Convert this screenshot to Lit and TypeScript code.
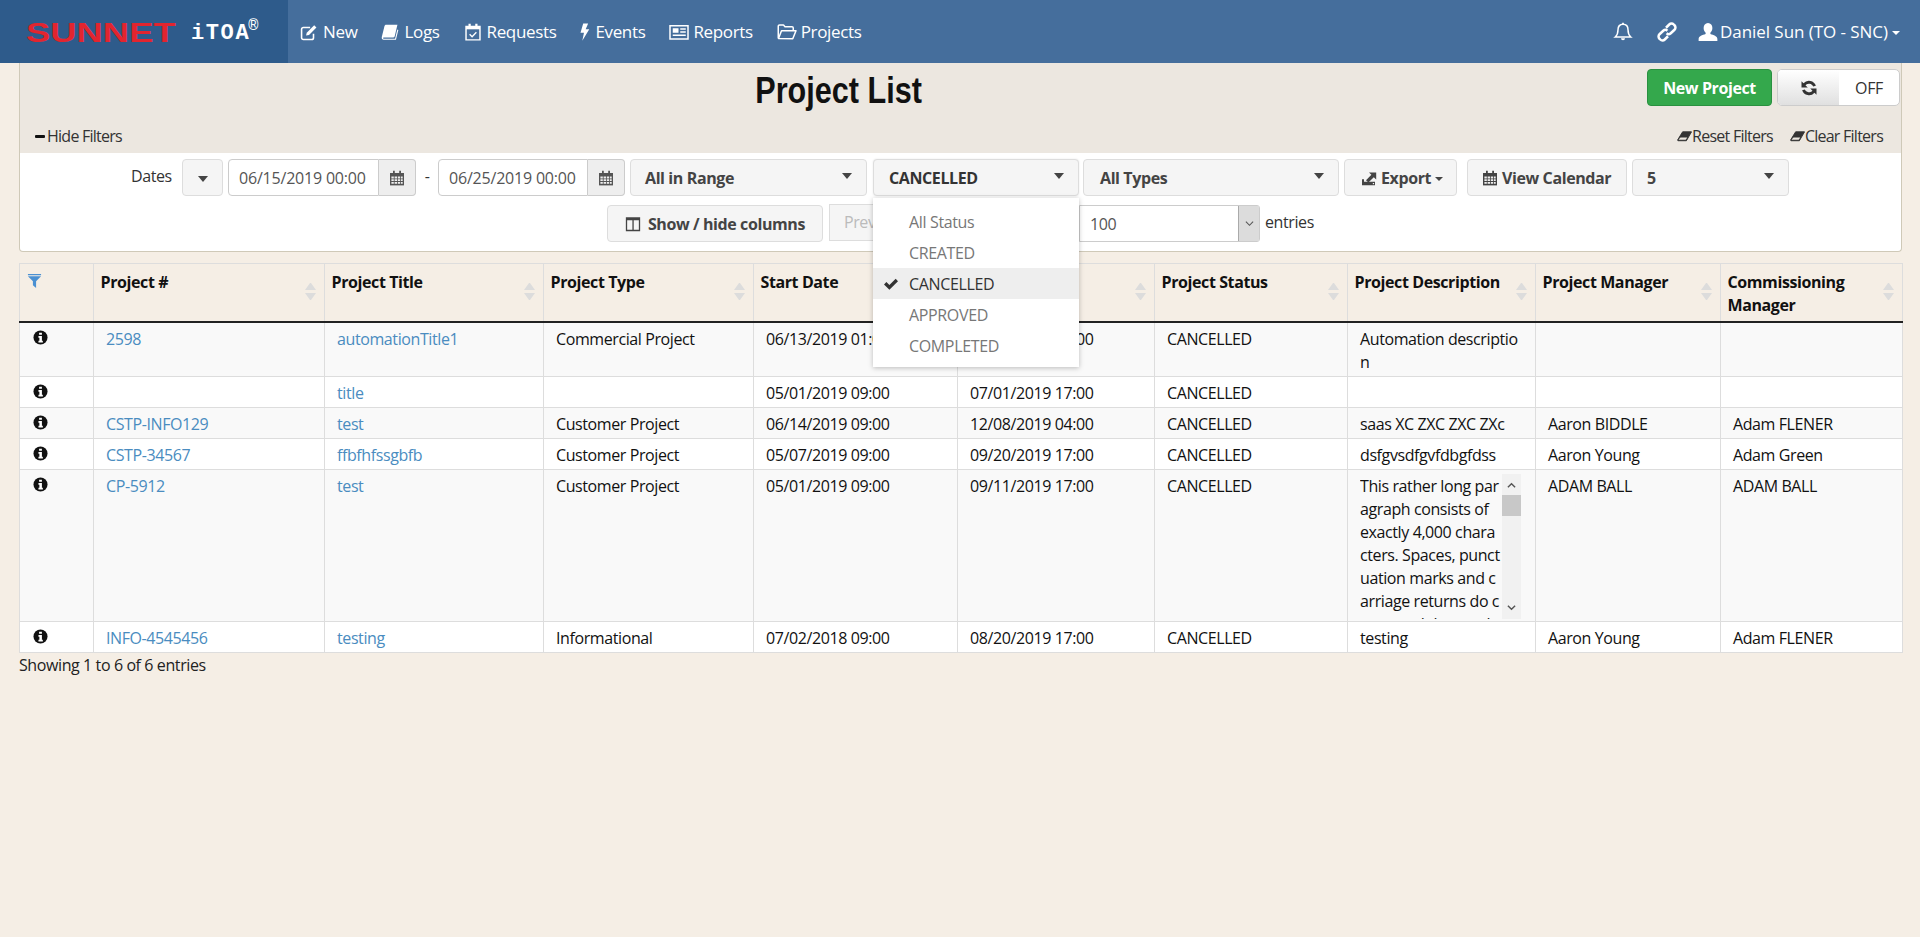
import { LitElement, html, css, svg } from 'lit';
import { customElement } from 'lit/decorators.js';

const icon = (body: unknown, cls = '') =>
  html`<svg class="ico ${cls}" viewBox="0 0 16 16" aria-hidden="true">${body}</svg>`;

const icons = {
  edit: svg`<path d="M12 9.500V13a1.600 1.600 0 0 1-1.600 1.600H3A1.600 1.600 0 0 1 1.400 13V5.600A1.600 1.600 0 0 1 3 4h6" fill="none" stroke="currentColor" stroke-width="1.400"/><path d="M6 8.600 12.600 2l2 2L8 10.600l-2.600.6z" fill="currentColor"/>`,
  book: svg`<path d="M4.600 1.500h10l-2.400 10.200a1.600 1.600 0 0 1-1.500 1.200H2.600c-.5 0-.8.3-.7.6.1.3.4.5.8.5h9.800l2-8.200.9.5-2.100 8.600H2.400C1.200 14.900.4 14 .7 12.500L3 3c.2-.9.8-1.500 1.600-1.500z" fill="currentColor"/>`,
  calcheck: svg`<path d="M1.800 3h12.400v12H1.800z" fill="none" stroke="currentColor" stroke-width="1.300"/><path d="M1.800 3h12.400v2.600H1.800z" fill="currentColor"/><path d="M4 .6h2v3.400H4zM10 .6h2v3.400h-2z" fill="currentColor"/><path d="m5 10 2.200 2.200L11 8.200" fill="none" stroke="currentColor" stroke-width="1.200"/>`,
  bolt: svg`<path d="M6.400.4h4.400L8.600 5.600h3.200L5.600 15.800l1.500-7.200H4z" fill="currentColor"/>`,
  news: svg`<path d="M.8 3h14.400v10.600H.8z" fill="none" stroke="currentColor" stroke-width="1.200"/><path d="M3 5h4.600v3.600H3zM9 5h4.400v1.100H9zM9 7.400h4.400v1.100H9zM3 10h10.400v1.100H3z" fill="currentColor"/>`,
  folder: svg`<path d="M1 13V3.400c0-.6.4-1 1-1h3.200l1.200 1.400H12c.6 0 1 .4 1 1V7M1.200 13.200 3.600 7h11.600l-2.600 6.400z" fill="none" stroke="currentColor" stroke-width="1.200" stroke-linejoin="round"/>`,
  bell: svg`<path d="M8 1.800c-2.800 0-4 2.200-4 4.400 0 3-.8 4.600-2.200 5.800h12.400C12.800 10.800 12 9.200 12 6.200c0-2.200-1.200-4.400-4-4.400z" fill="none" stroke="currentColor" stroke-width="1.200"/><path d="M6.400 13h3.200a1.600 1.600 0 0 1-3.200 0zM7.300.6h1.400v1.400H7.300z" fill="currentColor"/>`,
  chain: svg`<path d="M7.200 4.600 9.800 2a2.500 2.500 0 0 1 3.600 0l.6.6a2.500 2.500 0 0 1 0 3.600L11 9a2.400 2.400 0 0 1-3.300 0M8.800 11.400 6.200 14a2.500 2.500 0 0 1-3.600 0l-.6-.6a2.500 2.500 0 0 1 0-3.600L5 7a2.400 2.400 0 0 1 3.300 0" fill="none" stroke="currentColor" stroke-width="2"/>`,
  user: svg`<path d="M8 .8c2.200 0 3.500 1.700 3.500 3.900 0 1.600-.7 3-1.600 3.800v1.100c2.600.8 5.600 1.700 5.600 3.900v1.700H.5v-1.700c0-2.200 3-3.100 5.600-3.900V8.500C5.200 7.700 4.500 6.300 4.500 4.700 4.500 2.500 5.800.8 8 .8z" fill="currentColor"/>`,
  eraser: svg`<path d="M6 3h9.500L10 12.500H1L.6 11.800z" fill="currentColor"/><path d="M3.700 9 1.500 11.400h7.800L11 9z" fill="#ece7e0"/><path d="M.6 11.800 6 3h9.500L10 12.500H1z" fill="none" stroke="currentColor" stroke-width="1"/>`,
  refresh: svg`<path d="M13.500 6.200A5.800 5.800 0 0 0 3.600 4.200L2 2.600v5h5L5.200 5.800a3.600 3.600 0 0 1 6.100 1z" fill="currentColor"/><path d="M2.500 9.800a5.800 5.800 0 0 0 9.900 2l1.600 1.600v-5H9l1.800 1.800a3.600 3.600 0 0 1-6.100-1z" fill="currentColor"/>`,
  cal: svg`<path d="M1 3h14v12.400H1z" fill="currentColor"/><path d="M4 .8h1.800V3.600H4zM10.200.8H12V3.600h-1.800z" fill="currentColor"/><path d="M2.400 6.600h2.400v1.800H2.400zM5.600 6.600H8v1.800H5.600zM8.800 6.600h2.400v1.800H8.800zM12 6.600h1.700v1.800H12zM2.400 9.300h2.400v1.800H2.400zM5.600 9.300H8v1.800H5.600zM8.800 9.300h2.400v1.800H8.800zM12 9.300h1.700v1.800H12zM2.400 12h2.400v1.800H2.400zM5.600 12H8v1.800H5.600zM8.800 12h2.400v1.800H8.800zM12 12h1.700v1.800H12z" fill="#eee"/>`,
  columns: svg`<path d="M1.500 2h13v12.500h-13z" fill="none" stroke="currentColor" stroke-width="1.300"/><path d="M1.500 2h13v2.200h-13zM7.400 3h1.300v11H7.400z" fill="currentColor"/>`,
  exportIco: svg`<path d="M1 9.200h2v2.600h11v3.400H1z" fill="currentColor"/><path d="M11.800 13h1.300v1.200h-1.300z" fill="#f5f5f5"/><path d="M5 10.200 10.400 4.800 8 2.400h7.200v7.200L12.800 7.200 7.400 12.600z" fill="currentColor"/>`,
  check: svg`<path d="m1 8.500 2.400-2.400 3 3L12.700 2.800 15 5.200 6.400 13.800z" fill="currentColor"/>`,
  info: svg`<circle cx="8" cy="8" r="7.500" fill="currentColor"/><path d="M6.500 2.800h3v2.300h-3zM5.800 6.300h3.700v5.100h1v1.900H5.800v-1.900h1V8.200h-1z" fill="#fff"/>`,
  filter: svg`<path d="M1 .5h14v1.400H1zM1 3h14L9.700 8.300v7.200L6.300 12.600V8.300z" fill="currentColor"/>`,
};

const navItems = [
  ['New', icons.edit, ''],
  ['Logs', icons.book, ''],
  ['Requests', icons.calcheck, ''],
  ['Events', icons.bolt, 'slim'],
  ['Reports', icons.news, 'wide'],
  ['Projects', icons.folder, 'wide'],
] as const;

const statuses = ['All Status', 'CREATED', 'CANCELLED', 'APPROVED', 'COMPLETED'];

const columns = [
  'Project #',
  'Project Title',
  'Project Type',
  'Start Date',
  'End Date',
  'Project Status',
  'Project Description',
  'Project Manager',
  'Commissioning Manager',
];

const rows = [
  ['2598', 'automationTitle1', 'Commercial Project', '06/13/2019 01:00', '06/20/2019 17:00', 'CANCELLED', ['Automation descriptio', 'n'], '', ''],
  ['', 'title', '', '05/01/2019 09:00', '07/01/2019 17:00', 'CANCELLED', [], '', ''],
  ['CSTP-INFO129', 'test', 'Customer Project', '06/14/2019 09:00', '12/08/2019 04:00', 'CANCELLED', ['saas XC ZXC ZXC ZXc'], 'Aaron BIDDLE', 'Adam FLENER'],
  ['CSTP-34567', 'ffbfhfssgbfb', 'Customer Project', '05/07/2019 09:00', '09/20/2019 17:00', 'CANCELLED', ['dsfgvsdfgvfdbgfdss'], 'Aaron Young', 'Adam Green'],
  ['CP-5912', 'test', 'Customer Project', '05/01/2019 09:00', '09/11/2019 17:00', 'CANCELLED', null, 'ADAM BALL', 'ADAM BALL'],
  ['INFO-4545456', 'testing', 'Informational', '07/02/2018 09:00', '08/20/2019 17:00', 'CANCELLED', ['testing'], 'Aaron Young', 'Adam FLENER'],
] as const;

const longText = [
  'This rather long par',
  'agraph consists of',
  'exactly 4,000 chara',
  'cters. Spaces, punct',
  'uation marks and c',
  'arriage returns do c',
  'ount and the result',
];

@customElement('app-root')
export class AppRoot extends LitElement {
  static styles = css`
    :host {
      display: block;
      min-height: 937px;
      background: #f5eee5;
      font-family: 'Open Sans', 'Noto Sans', sans-serif;
      font-size: 16px;
      letter-spacing: -0.4px;
      color: #222;
    }
    * { box-sizing: border-box; }
    .ico { width: 16px; height: 16px; flex: none; display: block; }

    /* top bar */
    .topbar {
      height: 63px;
      background: #456e9c;
      color: #fff;
      display: flex;
      align-items: center;
      font-size: 17px;
      letter-spacing: -0.35px;
    }
    .brand {
      width: 288px;
      height: 100%;
      background: #2e5b8b;
      display: flex;
      align-items: center;
      padding-left: 26px;
      flex: none;
    }
    .sunnet {
      width: 165px;
      margin-top: 3px;
      font: bold 28px/1 'Liberation Sans', sans-serif;
      letter-spacing: 0;
      color: #e2252f;
      transform: scaleX(1.3);
      transform-origin: left center;
    }
    .itoa {
      font: bold 22px/1 'Liberation Mono', monospace;
      letter-spacing: 1.6px;
      margin-top: 5px;
    }
    .itoa sup { font-size: 17px; font-weight: normal; line-height: 0; vertical-align: 9px; letter-spacing: 0; margin-left: -2px; }
    .nav { display: flex; align-items: center; padding-left: 12px; }
    .nav a { display: flex; align-items: center; gap: 5px; margin-right: 24px; }
    .nav .ico { width: 18px; height: 18px; }
    .nav .slim { width: 18px; height: 22px; margin-left: -4px; margin-right: -4px; }
    .nav .wide { width: 20px; height: 20px; margin-right: -1px; }
    .right { margin-left: auto; display: flex; align-items: center; padding-right: 20px; letter-spacing: -0.05px; }
    .right .ico { width: 20px; height: 20px; }
    .right .bell { margin-right: 24px; }
    .right .chain { margin-right: 21px; }
    .right .uname { margin-left: 2px; }
    .ucaret { margin-left: 4px; margin-top: 3px; border: 4.5px solid transparent; border-top-color: #fff; border-bottom: 0; }

    /* filter panel */
    .main { padding: 0 18px 0 19px; }
    .panel {
      height: 189px;
      border: 1px solid #cfc9b8;
      border-top: 0;
      border-radius: 0 0 4px 4px;
      background: #fff;
      position: relative;
    }
    .panel-head { height: 90px; background: #ece7e0; display: flex; flex-direction: column; }
    .head-top { height: 56px; display: flex; padding-top: 6px; }
    .title {
      flex: none;
      width: 1627px;
      text-align: center;
      margin: 0;
      padding-left: 12px;
      font: bold 36px/44px 'Liberation Sans', sans-serif;
      letter-spacing: 0;
      color: #111;
      transform: scaleX(0.85);
    }
    .btn-new {
      flex: none;
      width: 125px;
      height: 37px;
      background: #34a84c;
      border: 1px solid #2a9140;
      border-radius: 4px;
      color: #fff;
      font-weight: 700;
      display: flex;
      align-items: center;
      justify-content: center;
    }
    .toggle {
      flex: none;
      width: 123px;
      height: 37px;
      margin-left: 5px;
      display: flex;
      border: 1px solid #ccc;
      border-radius: 5px;
      overflow: hidden;
      background: #fff;
      color: #333;
    }
    .toggle .sw {
      width: 61px;
      background: linear-gradient(#fff, #e0e0e0);
      display: flex;
      align-items: center;
      justify-content: center;
    }
    .toggle .ico { width: 20px; height: 20px; }
    .toggle .off { flex: 1; display: flex; align-items: center; justify-content: center; }
    .head-links { display: flex; align-items: center; height: 34px; padding: 0 18px 0 15px; letter-spacing: -0.75px; }
    .hlink { display: flex; align-items: center; color: #333; }
    .hlink .ico { width: 15px; height: 15px; }
    .hide-dash { width: 10px; height: 3px; background: #111; border-radius: 1px; margin-right: 2px; }
    .spacer { flex: 1; }
    .hlink.reset { margin-right: 17px; }

    .filters { display: flex; align-items: flex-start; padding: 6px 0 0 111px; height: 44px; }
    .filters-2 { display: flex; padding: 8px 0 0 587px; align-items: flex-start; }
    .dates { width: 39px; margin-right: 12px; margin-top: 6px; color: #333; }
    .fbtn {
      height: 37px;
      background: #f5f5f5;
      border: 1px solid #ddd;
      border-radius: 4px;
      display: flex;
      align-items: center;
      padding: 0 14px;
      font-weight: 700;
      color: #444;
      flex: none;
      gap: 4px;
    }
    .caret { border: 5px solid transparent; border-top: 6px solid #444; border-bottom: 0; margin-left: auto; margin-top: -4px; }
    .btn-caret { width: 41px; justify-content: center; padding: 0; margin-right: 5px; }
    .btn-caret .caret { margin: 3px 0 0; }
    .date {
      height: 37px;
      flex: none;
      background: #fff;
      border: 1px solid #ccc;
      border-radius: 4px 0 0 4px;
      padding-left: 10px;
      display: flex;
      align-items: center;
      color: #555;
      letter-spacing: -0.2px;
    }
    .date-a { width: 151px; }
    .date-b { width: 150px; }
    .addon {
      width: 37px;
      height: 37px;
      flex: none;
      background: #eee;
      border: 1px solid #ccc;
      border-left: 0;
      border-radius: 0 4px 4px 0;
      color: #555;
      display: flex;
      align-items: center;
      justify-content: center;
    }
    .dash { width: 22px; flex: none; text-align: center; color: #333; margin-top: 6px; }
    .w-range { width: 237px; margin-left: 5px; }
    .w-status { width: 206px; margin-left: 6px; padding-left: 15px; color: #333; box-shadow: 0 0 2px rgba(0,0,0,.1); }
    .w-types { width: 256px; margin-left: 4px; padding-left: 16px; }
    .w-export { width: 113px; margin-left: 5px; padding: 0 12px 0 16px; gap: 4px; }
    .w-export .caret { border-width: 4px; margin: 2px 0 0 0; }
    .w-cal { width: 160px; margin-left: 10px; padding: 0 0 0 14px; }
    .w-size { width: 157px; margin-left: 5px; }
    .status-wrap { position: relative; }
    .menu {
      position: absolute;
      left: 6px;
      top: 39px;
      width: 206px;
      height: 169px;
      padding-top: 8px;
      background: #fff;
      box-shadow: 0 1px 5px rgba(0,0,0,.25);
      z-index: 5;
      color: #777;
      letter-spacing: -0.35px;
    }
    .menu div { height: 31px; display: flex; align-items: center; padding-left: 36px; position: relative; }
    .menu .on { background: #eee; color: #333; }
    .menu .ico { position: absolute; left: 10px; color: #333; top: 8px; }

    .w-cols { width: 216px; gap: 7px; justify-content: center; padding: 0; }
    .prev {
      flex: none;
      width: 250px;
      height: 37px;
      margin-left: 6px;
      background: #f5f5f5;
      border: 1px solid #ddd;
      color: #bbb;
      padding: 6px 14px;
      margin-top: -1px;
    }
    .len {
      width: 181px;
      height: 37px;
      flex: none;
      border: 1px solid #ccc;
      border-radius: 0 3px 3px 0;
      display: flex;
      align-items: center;
      justify-content: space-between;
      padding-left: 10px;
      color: #555;
      background: #fff;
    }
    .len-arrow {
      width: 21px;
      height: 100%;
      background: #dcdcdc;
      border-left: 1px solid #aaa;
      display: flex;
      align-items: center;
      justify-content: center;
    }
    .entries { margin-left: 5px; line-height: 34px; color: #333; }

    /* table */
    table {
      width: 1883px;
      margin-top: 11px;
      table-layout: fixed;
      border-collapse: collapse;
      color: #111;
      background: #fff;
    }
    th, td { border: 1px solid #ddd; vertical-align: top; line-height: 23px; }
    th { background: #f5eee5; border-bottom: 2px solid #222; padding: 7px 6px 2px 6.5px; text-align: left; height: 58px; font-weight: 700; color: #111; }
    td { padding: 5px 12px 2px; height: 30px; }
    tbody tr:nth-child(odd) { background: #f9f9f9; }
    a.link { color: #4a8cc0; }
    .th { display: flex; justify-content: space-between; }
    .sort { flex: none; margin: 12px 2px 0 6px; width: 11px; }
    .sort i { display: block; border: 5.5px solid transparent; border-top: 0; border-bottom: 7px solid #dcdcdc; }
    .sort i + i { margin-top: 3px; border-bottom: 0; border-top: 7px solid #dcdcdc; }
    th.first { padding: 9px 7px; }
    .filter-ico { color: #4a90d2; width: 15px; height: 16px; }
    td.first { padding: 7px 0 0; }
    td.first .ico { width: 15px; height: 15px; margin-left: 13px; color: #111; }
    .desc-line { white-space: nowrap; }
    .scrollbox { display: flex; height: 145px; overflow: hidden; margin-top: -1px; }
    .scrollbox .txt { width: 142px; overflow: hidden; white-space: nowrap; flex: none; padding-top: 1px; }
    .bar { width: 19px; flex: none; height: 145px; background: #f1f1f1; position: relative; display: flex; flex-direction: column; align-items: center; justify-content: space-between; padding: 7px 0; }
    .bar::before { content: ''; position: absolute; left: 0; top: 21px; width: 100%; height: 21px; background: #c8c8c8; }
    .chev { width: 9px; height: 9px; color: #555; }
    .info { padding-top: 1px; color: #222; }
  `;

  render() {
    return html`
      <div class="topbar">
        <div class="brand">
          <div class="sunnet">SUNNET</div>
          <div class="itoa">iTOA<sup>®</sup></div>
        </div>
        <nav class="nav">
          ${navItems.map(([t, i, c]) => html`<a>${icon(i, c)}${t}</a>`)}
        </nav>
        <div class="right">
          ${icon(icons.bell, 'bell')}${icon(icons.chain, 'chain')}${icon(icons.user)}
          <span class="uname">Daniel Sun (TO - SNC)</span><span class="ucaret"></span>
        </div>
      </div>
      <div class="main">
        <section class="panel">
          <div class="panel-head">
            <div class="head-top">
              <h1 class="title">Project List</h1>
              <div class="btn-new">New Project</div>
              <div class="toggle">
                <div class="sw">${icon(icons.refresh)}</div>
                <div class="off">OFF</div>
              </div>
            </div>
            <div class="head-links">
              <span class="hlink"><span class="hide-dash"></span>Hide Filters</span>
              <span class="spacer"></span>
              <span class="hlink reset">${icon(icons.eraser)}Reset Filters</span>
              <span class="hlink">${icon(icons.eraser)}Clear Filters</span>
            </div>
          </div>
          <div class="filters">
            <span class="dates">Dates</span>
            <div class="fbtn btn-caret"><span class="caret"></span></div>
            <div class="date date-a">06/15/2019 00:00</div>
            <div class="addon">${icon(icons.cal)}</div>
            <span class="dash">-</span>
            <div class="date date-b">06/25/2019 00:00</div>
            <div class="addon">${icon(icons.cal)}</div>
            <div class="fbtn w-range">All in Range<span class="caret"></span></div>
            <div class="status-wrap">
              <div class="fbtn w-status">CANCELLED<span class="caret"></span></div>
              <div class="menu">
                ${statuses.map(
                  (s) => html`<div class=${s === 'CANCELLED' ? 'on' : ''}>${s === 'CANCELLED' ? icon(icons.check) : ''}${s}</div>`
                )}
              </div>
            </div>
            <div class="fbtn w-types">All Types<span class="caret"></span></div>
            <div class="fbtn w-export">${icon(icons.exportIco)}Export<span class="caret"></span></div>
            <div class="fbtn w-cal">${icon(icons.cal)}View Calendar</div>
            <div class="fbtn w-size">5<span class="caret"></span></div>
          </div>
          <div class="filters-2">
            <div class="fbtn w-cols">${icon(icons.columns)}Show / hide columns</div>
            <div class="prev">Previous</div>
            <div class="len">100<span class="len-arrow"><svg class="chev" viewBox="0 0 10 10"><path d="M1 3l4 4 4-4" fill="none" stroke="currentColor" stroke-width="1.200"/></svg></span></div>
            <span class="entries">entries</span>
          </div>
        </section>
        <table>
          <colgroup>
            ${[74, 231, 219, 210, 204, 197, 193, 188, 185, 182].map((w) => html`<col style="width:${w}px" />`)}
          </colgroup>
          <thead>
            <tr>
              <th class="first">${icon(icons.filter, 'filter-ico')}</th>
              ${columns.map((c) => html`<th><div class="th"><span>${c}</span><span class="sort"><i></i><i></i></span></div></th>`)}
            </tr>
          </thead>
          <tbody>
            ${rows.map(
              (r) => html`<tr>
                <td class="first">${icon(icons.info)}</td>
                <td><a class="link">${r[0]}</a></td>
                <td><a class="link">${r[1]}</a></td>
                <td>${r[2]}</td>
                <td>${r[3]}</td>
                <td>${r[4]}</td>
                <td>${r[5]}</td>
                <td>
                  ${r[6] === null
                    ? html`<div class="scrollbox">
                        <div class="txt">${longText.map((l) => html`<div>${l}</div>`)}</div>
                        <div class="bar">
                          <svg class="chev" viewBox="0 0 10 10"><path d="M1 7l4-4 4 4" fill="none" stroke="currentColor" stroke-width="1.600"/></svg>
                          <svg class="chev" viewBox="0 0 10 10"><path d="M1 3l4 4 4-4" fill="none" stroke="currentColor" stroke-width="1.600"/></svg>
                        </div>
                      </div>`
                    : r[6].map((l) => html`<div class="desc-line">${l}</div>`)}
                </td>
                <td>${r[7]}</td>
                <td>${r[8]}</td>
              </tr>`
            )}
          </tbody>
        </table>
        <div class="info">Showing 1 to 6 of 6 entries</div>
      </div>
    `;
  }
}
